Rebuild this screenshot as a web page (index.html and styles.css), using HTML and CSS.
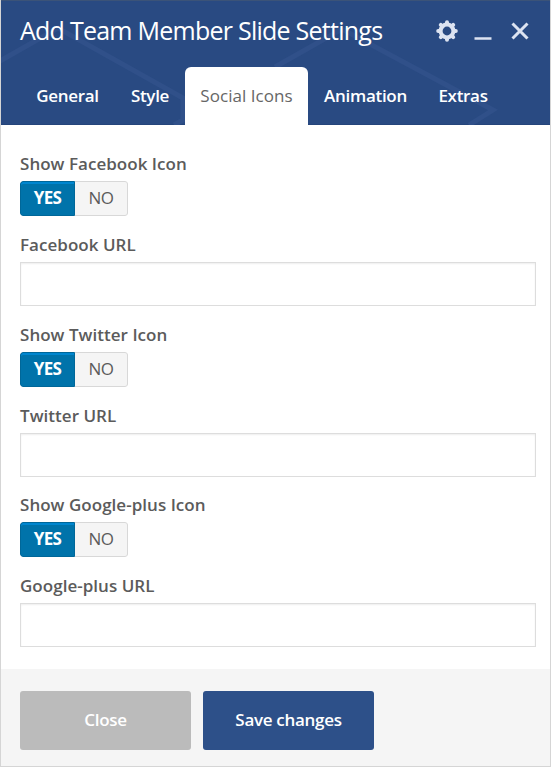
FILE: index.html
```html
<!DOCTYPE html>
<html lang="en">
<head>
<meta charset="utf-8">
<title>Add Team Member Slide Settings</title>
<link rel="stylesheet" href="styles.css">
</head>
<body>
<div class="panel">
  <header class="header">
    <svg class="pattern" viewBox="0 0 551 125" aria-hidden="true">
      <path d="M0 61L58 28L183 98V120L174 125M275 67L342 29L493 110L469 125"/>
    </svg>
    <div class="titlebar">
      <h1 class="title">Add Team Member Slide Settings</h1>
      <div class="controls">
        <svg class="gear" viewBox="0 0 22 22"><circle cx="11" cy="11" r="6.4"/><path d="M11 2.2v1.5M11 18.3v1.5M2.2 11h1.5M18.3 11h1.5M4.8 4.8l1 1M16.2 16.2l1 1M4.8 17.2l1-1M16.2 5.8l1-1"/></svg>
        <svg class="minimize" viewBox="0 0 18 22"><path d="M.5 18.5h17"/></svg>
        <svg class="close" viewBox="0 0 18 22"><path d="M1.5 3.5l15 15M16.5 3.5l-15 15"/></svg>
      </div>
    </div>
    <nav class="tabs">
      <a class="tab">General</a><a class="tab">Style</a><a class="tab active">Social Icons</a><a class="tab">Animation</a><a class="tab">Extras</a>
    </nav>
  </header>
  <main class="content">
    <section class="group">
      <div class="label">Show Facebook Icon</div>
      <div class="toggle"><span class="yes">YES</span><span class="no">NO</span></div>
      <label class="label url" for="facebook">Facebook URL</label>
      <input class="input" id="facebook" type="text">
    </section>
    <section class="group">
      <div class="label">Show Twitter Icon</div>
      <div class="toggle"><span class="yes">YES</span><span class="no">NO</span></div>
      <label class="label url" for="twitter">Twitter URL</label>
      <input class="input" id="twitter" type="text">
    </section>
    <section class="group">
      <div class="label">Show Google-plus Icon</div>
      <div class="toggle"><span class="yes">YES</span><span class="no">NO</span></div>
      <label class="label url" for="google">Google-plus URL</label>
      <input class="input" id="google" type="text">
    </section>
  </main>
  <footer class="footer">
    <button class="button">Close</button>
    <button class="button save">Save changes</button>
  </footer>
</div>
</body>
</html>
```

FILE: styles.css
```css
* { box-sizing: border-box; }
body { margin: 0; font-family: "Open Sans", sans-serif; color: #5b5b5b; }
.panel { width: 551px; height: 767px; display: flex; flex-direction: column; background: #fff; border: 1px solid #d5d5d5; border-top: 0; overflow: hidden; }
.header { position: relative; height: 125px; flex: none; margin: 0 -1px; padding: 0 20px 0 19px; background: #294a82; border: 1px solid #25457b; border-top-color: #3b5378; display: flex; flex-direction: column; }
.pattern { position: absolute; left: -1px; top: -1px; width: 551px; height: 125px; fill: none; stroke: #305089; stroke-width: 5; }
.titlebar { position: relative; height: 66px; padding: 0 0 6px; display: flex; align-items: center; justify-content: space-between; }
.title { margin: 0; padding-bottom: 2px; color: #fff; font-size: 25px; line-height: 34px; font-weight: 400; letter-spacing: -.75px; white-space: nowrap; }
.controls { display: flex; align-items: center; gap: 16px; stroke: #dce3f1; fill: none; padding-right: 1px; }
.gear { width: 22px; height: 22px; stroke-width: 4; stroke-linecap: round; }
.minimize { width: 18px; height: 22px; stroke-width: 2.5; }
.close { width: 18px; height: 22px; stroke-width: 3; margin-left: 3px; }
.tabs { position: relative; flex: 1; display: grid; grid-template-columns: 95px 70px 123px 115px 80px; margin-bottom: -1px; }
.tab { color: #fff; font-size: 17px; font-weight: 600; line-height: 58px; text-align: center; letter-spacing: -.3px; white-space: nowrap; }
.tab.active { background: #fff; color: #666; border-radius: 6px 6px 0 0; font-weight: 400; letter-spacing: .05px; }
.content { flex: none; height: 544px; padding: 27px 15px 0 19px; }
.group { height: 170.7px; }
.label { display: block; height: 29px; line-height: 24px; font-size: 17px; font-weight: 600; letter-spacing: .03px; }
.toggle { width: 108px; height: 35px; display: flex; border-radius: 3px; overflow: hidden; font-size: 17px; line-height: 32px; text-align: center; letter-spacing: -.6px; }
.yes { width: 55px; background: #0073aa; color: #fff; font-weight: 700; border: 1px solid #006799; border-radius: 3px 0 0 3px; box-shadow: inset 0 2px #0086cf; }
.no { width: 53px; background: #f5f5f5; border: 1px solid #d8d8d8; border-left: 0; border-radius: 0 3px 3px 0; }
.url { margin-top: 17px; }
.input { display: block; width: 516px; height: 44px; border: 1px solid #ddd; background: #fff; box-shadow: inset 0 1px 2px rgba(0, 0, 0, .07); outline: 0; padding: 0 10px; font: 17px "Open Sans", sans-serif; }
.footer { flex: 1; background: #f5f5f5; padding: 22px 19px 0; display: flex; gap: 12px; align-items: flex-start; }
.button { width: 171px; height: 59px; border: 0; padding: 0 0 2px; border-radius: 3px; background: #bbb; color: #fff; font: 600 17px "Open Sans", sans-serif; letter-spacing: -.3px; }
.button.save { background: #2d5089; }
```
